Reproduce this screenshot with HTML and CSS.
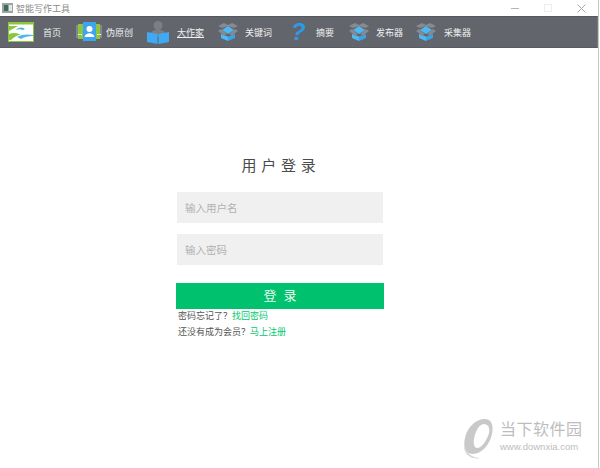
FILE: index.html
```html
<!DOCTYPE html>
<html lang="zh">
<head>
<meta charset="utf-8">
<title>智能写作工具</title>
<link rel="stylesheet" href="styles.css">
</head>
<body>
<div class="titlebar">
  <svg class="appicon" width="11" height="10" viewBox="0 0 11 10"><rect width="11" height="10" fill="#9aa5a2"/><rect x="2" y="2" width="4" height="6" fill="#3d6a60"/><rect x="7" y="2" width="3" height="6" fill="#e3e8e6"/></svg>
  <span class="apptitle">智能写作工具</span>
  <div class="winctl">
    <svg width="9" height="9" viewBox="0 0 9 9"><path d="M0 4.5h8" stroke="#b5b5b5"/></svg>
    <svg width="9" height="9" viewBox="0 0 9 9"><rect x=".5" y=".5" width="7" height="7" fill="none" stroke="#ececec"/></svg>
    <svg width="9" height="9" viewBox="0 0 9 9"><path d="M.5.5l8 8M8.500.5l-8 8" stroke="#a8a8a8"/></svg>
  </div>
</div>
<nav class="toolbar">
  <a class="tool t1">
    <svg class="ico" width="26" height="20" viewBox="0 0 26 20"><rect width="26" height="20" fill="#8cc63f"/><rect x="1" y="2.500" width="24" height="16.500" fill="#fff"/><path d="M1 4h9L1 9zM1 12c5-2 9-1 12 1-4 0-7 2-10 5H1z" fill="#8cc63f"/><path d="M8 8c3-3 6-3 9-1l-2 1c-3-1-4-1-7 0zM9 15c5-3 11-3 16-2v1c-5 0-9 1-12 3z" fill="#4db6e8"/></svg>
    <span>首页</span>
  </a>
  <a class="tool t2">
    <svg class="ico" width="26" height="22" viewBox="0 0 26 22"><rect x="0" y="4" width="26" height="13" fill="#85878c"/><rect x="2" y="3" width="22" height="15" fill="#8cc63f"/><rect x="7" y="1" width="13" height="19" fill="#3fa4ee"/><circle cx="13.500" cy="8" r="3" fill="#fff"/><path d="M8.500 16c1-5 9-5 10 0z" fill="#fff"/><path d="M2 13.500h4M21 13.500h4" stroke="#fff" stroke-dasharray="1.500 1"/></svg>
    <span>伪原创</span>
  </a>
  <a class="tool t3">
    <svg class="ico" width="22" height="23" viewBox="0 0 22 23"><circle cx="11" cy="4.500" r="4.500" fill="#7c7e85"/><path d="M4 13c0-6 14-6 14 0v3H4z" fill="#7c7e85"/><path d="M0 11l10.500 2v10L0 21zM22 11l-10.500 2v10L22 21z" fill="#3fa9f5"/></svg>
    <span class="under">大作家</span>
  </a>
  <a class="tool t4">
    <svg class="ico" width="20" height="18" viewBox="0 0 20 18"><use href="#box"/></svg>
    <span>关键词</span>
  </a>
  <a class="tool t5">
    <span class="qmark">?</span>
    <span>摘要</span>
  </a>
  <a class="tool t6">
    <svg class="ico" width="20" height="18" viewBox="0 0 20 18"><use href="#box"/></svg>
    <span>发布器</span>
  </a>
  <a class="tool t7">
    <svg class="ico" width="20" height="18" viewBox="0 0 20 18"><use href="#box"/></svg>
    <span>采集器</span>
  </a>
</nav>
<svg class="defs" width="0" height="0"><defs><g id="box"><path d="M0 3l6-3 4 2 4-2 6 3-4 2-6-2-6 2z" fill="#888a90"/><path d="M10 3l6 4-6 4-6-4z" fill="#4fb8f2"/><path d="M3 11l7 2.500V18l-7-3z" fill="#4fb8f2"/><path d="M17 11l-7 2.500V18l7-3z" fill="#39a3e6"/><path d="M0 8l3-2 6 5-3 1.500zM20 8l-3-2-6 5 3 1.500z" fill="#888a90"/></g></defs></svg>
<main class="login">
  <h1 class="heading">用户登录</h1>
  <div class="field">输入用户名</div>
  <div class="field second">输入密码</div>
  <button class="submit">登 录</button>
  <p class="hint first">密码忘记了？<a>找回密码</a></p>
  <p class="hint last">还没有成为会员？<a>马上注册</a></p>
</main>
<div class="watermark">
  <svg width="32" height="42" viewBox="0 0 32 42"><path fill-rule="evenodd" fill="#c9c9c9" d="M20 1c8-1 11 5 9 15-2 10-10 20-19 20C2 36 0 28 2 20 4 10 12 2 20 1zM20 6c-4 1-8 8-9 15-1 6 1 9 3 9 5 0 10-8 12-15 1-6-1-9-6-9z"/><path fill="#d6d6d6" d="M1 26c1 8 7 14 17 14-8 2-18-2-17-14z"/></svg>
  <div class="wm-text">
    <div class="wm-cn">当下软件园</div>
    <div class="wm-en">www.downxia.com</div>
  </div>
</div>
</body>
</html>
```
FILE: styles.css
```css
* { box-sizing: border-box; }
html, body { margin: 0; padding: 0; }
body {
  width: 599px;
  height: 468px;
  background: #fff;
  border-right: 1px solid #c8c8c8;
  overflow: hidden;
  position: relative;
  font-family: "Noto Sans CJK SC", "Liberation Sans", sans-serif;
}
.titlebar {
  height: 16px;
  display: flex;
  align-items: center;
  padding-left: 2px;
  background: #fff;
}
.appicon { flex: none; }
.apptitle {
  margin-left: 3px;
  font-size: 9px;
  color: #8a8a8a;
}
.winctl {
  margin-left: auto;
  display: flex;
  align-items: center;
  gap: 24px;
  padding-right: 12px;
}
.toolbar {
  height: 32px;
  background: #63656c;
  border-top: 1px solid #55575d;
  border-bottom: 1px solid #5a5c62;
  border-right: 1px solid #77797f;
  display: flex;
  align-items: center;
}
.tool {
  display: flex;
  align-items: center;
  color: #f0f0f0;
  font-size: 9px;
  white-space: nowrap;
}
.ico { flex: none; }
.t1 { margin-left: 8px; }
.t1 span { margin-left: 9px; }
.t2 { margin-left: 15px; }
.t2 span { margin-left: 4px; }
.t3 { margin-left: 14px; }
.t3 span { margin-left: 8px; }
.t4 { margin-left: 14px; }
.t4 span { margin-left: 7px; }
.t5 { margin-left: 19px; }
.t5 span:last-child { margin-left: 11px; }
.t6 { margin-left: 15px; }
.t6 span { margin-left: 7px; }
.t7 { margin-left: 13px; }
.t7 span { margin-left: 8px; }
.under { text-decoration: underline; }
.qmark {
  font-family: "Liberation Sans", sans-serif;
  font-weight: bold;
  font-style: italic;
  font-size: 24px;
  line-height: 24px;
  color: #2b9be8;
  width: 14px;
}
.defs { position: absolute; }
.login {
  width: 208px;
  margin: 0 0 0 176px;
  padding-top: 107px;
  display: flex;
  flex-direction: column;
}
.heading {
  margin: 0 0 17px;
  padding-left: 2px;
  font-weight: 400;
  font-size: 15px;
  line-height: 20px;
  letter-spacing: 4.700px;
  text-align: center;
  color: #4a4a4a;
}
.field {
  height: 31px;
  margin-left: 1px;
  width: 206px;
  background: #f0f0f0;
  color: #b0b0b0;
  font-size: 10.500px;
  line-height: 31px;
  padding-left: 8px;
}
.second { margin-top: 11px; }
.submit {
  margin-top: 18px;
  height: 26px;
  border: 0;
  padding: 0 0 3px;
  background: #00c26e;
  color: #eafbf2;
  font-family: inherit;
  font-size: 13px;
  word-spacing: 4px;
}
.hint {
  margin: 0 0 0 2px;
  font-size: 9px;
  line-height: 14px;
  color: #555;
}
.hint.last { margin-top: 2px; }
.hint a { color: #00c96e; }
.watermark {
  position: absolute;
  left: 463px;
  top: 418px;
  display: flex;
  align-items: flex-start;
  gap: 5px;
}
.wm-cn {
  font-size: 16px;
  line-height: 20px;
  letter-spacing: .5px;
  color: #bdbdbd;
}
.wm-en {
  margin-top: 3px;
  font-family: "Liberation Sans", sans-serif;
  font-size: 9.500px;
  line-height: 12px;
  color: #bdbdbd;
}
```
